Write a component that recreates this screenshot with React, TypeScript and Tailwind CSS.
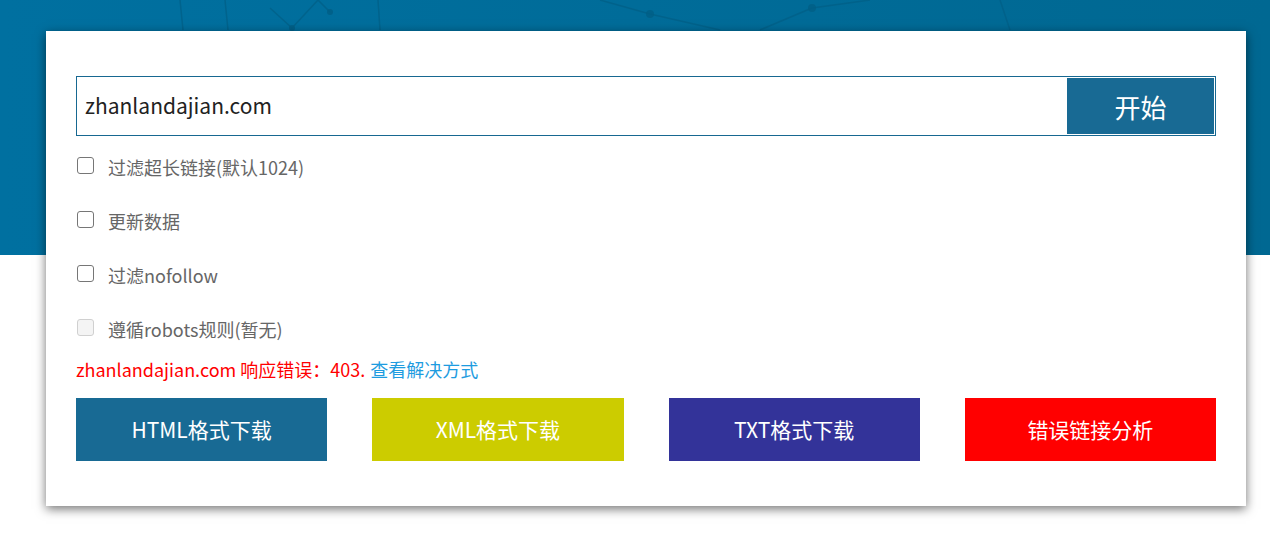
import React from 'react';

const options = [
  { label: '过滤超长链接(默认1024)', disabled: false },
  { label: '更新数据', disabled: false },
  { label: '过滤nofollow', disabled: false },
  { label: '遵循robots规则(暂无)', disabled: true },
];

const downloads = [
  { label: 'HTML格式下载', color: 'bg-[#186a94]' },
  { label: 'XML格式下载', color: 'bg-[#cccc00]' },
  { label: 'TXT格式下载', color: 'bg-[#333399]' },
  { label: '错误链接分析', color: 'bg-[#ff0000]' },
];

const font = { fontFamily: '"Noto Sans CJK SC", "Noto Sans", sans-serif' };

const Band: React.FC = () => (
  <div className="absolute inset-x-0 top-0 h-[255px] bg-gradient-to-r from-[#0070a0] to-[#006892] overflow-hidden">
    <svg className="absolute inset-0 w-full h-full" viewBox="0 0 1270 255" preserveAspectRatio="none">
      <g stroke="#005f86" strokeWidth="1.5" fill="none" opacity="0.7">
        <path d="M180 0 L183 30" />
        <path d="M225 0 L228 30" />
        <path d="M270 8 L292 28 L318 0" />
        <path d="M318 0 L330 12" />
        <path d="M378 0 L380 30" />
        <path d="M650 14 L720 30" />
        <path d="M650 14 L600 0" />
        <path d="M812 8 L760 30" />
        <path d="M812 8 L870 0" />
        <path d="M1000 0 L1010 30" />
      </g>
      <g fill="#005f86" opacity="0.8">
        <circle cx="292" cy="28" r="3" />
        <circle cx="330" cy="12" r="3" />
        <circle cx="650" cy="14" r="4" />
        <circle cx="812" cy="8" r="4" />
      </g>
    </svg>
  </div>
);

export default function App() {
  return (
    <div className="relative w-full min-h-[540px] bg-white" style={font}>
      <Band />
      <div className="relative pt-[31px] pl-[46px] flex">
        <div className="w-[1200px] bg-white shadow-[0_3px_10px_rgba(0,0,0,0.55)] pt-[45px] px-[30px] pb-[45px]">
          <div className="flex h-[60px] border border-[#176891]">
            <div className="flex-1 flex items-center pl-[8px] text-[21px] text-[#222]">zhanlandajian.com</div>
            <button className="w-[147px] my-px mr-px bg-[#186a94] text-white text-[26px] flex items-center justify-center">
              开始
            </button>
          </div>
          <div className="mt-[4px] flex flex-col">
            {options.map((o) => (
              <label key={o.label} className="h-[54px] flex items-center pl-px">
                <span
                  className={
                    o.disabled
                      ? 'w-[17px] h-[17px] rounded-[3px] border border-[#d0d0d0] bg-[#f4f4f4] -mt-[3px]'
                      : 'w-[17px] h-[17px] rounded-[3px] border border-[#767676] bg-white -mt-[3px]'
                  }
                />
                <span className="ml-[14px] text-[18px] text-[#666]">{o.label}</span>
              </label>
            ))}
          </div>
          <div className="h-[26px] flex items-center text-[18px]">
            <span className="text-[#ff0000]">zhanlandajian.com 响应错误：403.</span>
            <a className="ml-[5px] text-[#1e9ce0]">查看解决方式</a>
          </div>
          <div className="mt-[16px] grid grid-cols-4 gap-[45px]">
            {downloads.map((d) => (
              <button
                key={d.label}
                className={`${d.color} h-[63px] text-white text-[21px] flex items-center justify-center`}
              >
                {d.label}
              </button>
            ))}
          </div>
        </div>
      </div>
    </div>
  );
}
